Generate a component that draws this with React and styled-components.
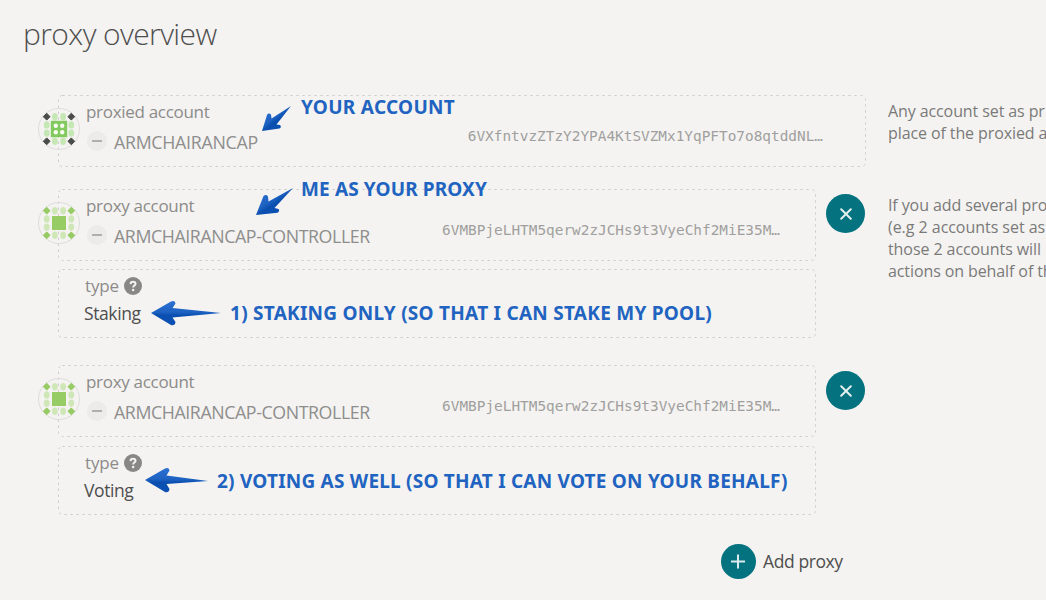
import React from "react";
import styled, { createGlobalStyle } from "styled-components";

const Global = createGlobalStyle`
  * { box-sizing: border-box; }
  body {
    margin: 0;
    background: #f4f3f1;
    color: #4e4e4e;
    font-family: "Open Sans", "Noto Sans", sans-serif;
    overflow: hidden;
  }
`;

const Page = styled.main`
  position: relative;
  width: 1046px;
  height: 600px;
  padding: 11px 0 0 23px;
  overflow: hidden;
`;

const Title = styled.h1`
  margin: 0 0 38px;
  font-size: 30px;
  font-weight: 300;
  line-height: 46px;
  letter-spacing: -0.6px;
  white-space: nowrap;
  color: #4e4e4e;
`;

const Columns = styled.div`
  display: flex;
  gap: 22px;
  padding-left: 35px;
`;

const Content = styled.section`
  width: 808px;
  flex: none;
  display: flex;
  flex-direction: column;
`;

const Help = styled.aside`
  flex: none;
  width: 158px;
  padding-top: 5px;
  display: flex;
  flex-direction: column;
  gap: 50px;
`;

const HelpText = styled.p`
  margin: 0;
  font-size: 16px;
  line-height: 22px;
  color: #7a7a79;
  white-space: nowrap;
`;

const HelpLine = styled.span`
  display: block;
  width: max-content;
  letter-spacing: ${(p) => p.$track}px;
`;

const ProxyRow = styled.div`
  display: flex;
  gap: 10px;
  margin-top: ${(p) => p.$top}px;
`;

const Fields = styled.div`
  width: 758px;
  display: flex;
  flex-direction: column;
  gap: ${(p) => p.$gap}px;
`;

const Box = styled.div`
  position: relative;
  border: 1px solid transparent;
`;

const Outline = styled.svg`
  position: absolute;
  top: -1px;
  left: -1px;
  width: calc(100% + 2px);
  height: calc(100% + 2px);
  overflow: hidden;
  pointer-events: none;

  rect {
    x: 0.5px;
    y: 0.5px;
    width: calc(100% - 1px);
    height: calc(100% - 1px);
    rx: 4px;
    fill: none;
    stroke: #cccbc9;
    stroke-dasharray: 2.2 3.8;
  }
`;

const AccountBox = styled(Box)`
  height: 72px;
  padding-right: ${(p) => p.$right}px;
  display: flex;
  align-items: center;
`;

const TypeBox = styled(Box)`
  height: 69px;
  padding: 3px 0 0 26px;
`;

const Identicon = styled.svg`
  position: relative;
  z-index: 1;
  flex: none;
  width: 42px;
  height: 42px;
  margin: -4px 0 0 -21px;
`;

const Details = styled.div`
  flex: 1;
  padding-left: 6px;
  margin-top: -4px;
`;

const Label = styled.div`
  display: flex;
  align-items: center;
  gap: 5px;
  height: ${(p) => p.$height || 26}px;
  font-size: 17px;
  letter-spacing: ${(p) => p.$track}px;
  color: #8c8b8a;
  white-space: nowrap;
`;

const NameLine = styled.div`
  display: flex;
  align-items: center;
  gap: 7px;
  height: 35px;
`;

const Minus = styled.span`
  width: 20px;
  height: 20px;
  margin: -2px 0 0 1px;
  border-radius: 50%;
  background: #ecebea;
  display: grid;
  place-items: center;

  &::before {
    content: "";
    width: 10px;
    height: 2px;
    margin-right: 1px;
    background: #b0afae;
  }
`;

const Name = styled.span`
  font-size: 17.8px;
  letter-spacing: ${(p) => p.$track}px;
  color: #8e8e8d;
  white-space: nowrap;
`;

const Address = styled.span`
  font-family: "DejaVu Sans Mono", monospace;
  font-size: 14.4px;
  letter-spacing: 0;
  padding-top: 9px;
  color: #a09f9e;
`;

const Value = styled.div`
  height: 30px;
  line-height: 30px;
  margin-left: -1px;
  font-size: 17.5px;
  letter-spacing: -0.4px;
  color: #4e4e4e;
`;

const HelpIcon = styled.svg`
  width: 18px;
  height: 18px;
  margin-top: 1px;
`;

const RoundButton = styled.button`
  flex: none;
  width: ${(p) => p.$size}px;
  height: ${(p) => p.$size}px;
  margin: ${(p) => p.$top || 0}px 0 0;
  padding: 0;
  border: 0;
  border-radius: 50%;
  background: #04737f;
  display: grid;
  place-items: center;
`;

const Actions = styled.div`
  display: flex;
  align-items: center;
  gap: 7px;
  margin: 29px 0 0 663px;
`;

const ActionLabel = styled.span`
  font-size: 17.5px;
  letter-spacing: -0.4px;
  padding-bottom: 2px;
  color: #4e4e4e;
  white-space: nowrap;
`;

const Note = styled.span`
  position: absolute;
  left: ${(p) => p.$x}px;
  top: ${(p) => p.$y}px;
  font-family: "Noto Sans", sans-serif;
  font-size: 19px;
  font-weight: 700;
  line-height: 26px;
  letter-spacing: ${(p) => p.$track || 0}px;
  color: #2163c0;
  white-space: nowrap;
`;

const Arrows = styled.svg`
  position: absolute;
  inset: 0;
  pointer-events: none;
`;

function Avatar({ main, light, corner, dotted }) {
  const e = 4.1;
  const o = 12.3;
  return (
    <Identicon viewBox="-21 -21 42 42">
      <circle r="20.5" fill="none" stroke="#dddddb" />
      {[-1, 1].map((a) =>
        [-1, 1].map((b) => (
          <g key={`${a}${b}`}>
            <ellipse cx={a * e} cy={b * o} rx="2.9" ry="3.7" fill={light} />
            <ellipse cx={a * o} cy={b * e} rx="2.9" ry="3.6" fill={light} />
            <path
              d="M0-3.400 3.400 0 0 3.400-3.400 0Z"
              transform={`translate(${a * o} ${b * o})`}
              fill={corner}
              stroke={corner}
              strokeWidth="1"
              strokeLinejoin="round"
            />
          </g>
        ))
      )}
      {dotted ? (
        <>
          <rect x="-8.2" y="-8.2" width="16.4" height="16.4" fill={main} />
          {[-3.2, 3.2].map((x) =>
            [-3.2, 3.2].map((y) => (
              <circle key={`${x}${y}`} cx={x} cy={y} r="2.2" fill="#f6fbf3" />
            ))
          )}
        </>
      ) : (
        <rect x="-7" y="-7" width="14" height="14" fill={main} />
      )}
    </Identicon>
  );
}

function Account({ label, labelTrack, name, nameTrack, address, right, avatar }) {
  return (
    <AccountBox $right={right}>
      <Outline><rect /></Outline>
      <Avatar {...avatar} />
      <Details>
        <Label $track={labelTrack}>{label}</Label>
        <NameLine>
          <Minus />
          <Name $track={nameTrack}>{name}</Name>
        </NameLine>
      </Details>
      <Address>{address}</Address>
    </AccountBox>
  );
}

function TypeField({ value }) {
  return (
    <TypeBox>
      <Outline><rect /></Outline>
      <Label $track={-0.15} $height={25}>
        type
        <HelpIcon viewBox="0 0 18 18">
          <circle cx="9" cy="9" r="9" fill="#888786" />
          <path
            d="M6.5 7.1C6.6 5.4 7.6 4.7 9 4.7c1.500 0 2.500.8 2.500 2 0 1.900-2.300 1.800-2.300 3.700"
            fill="none"
            stroke="#f4f3f1"
            strokeWidth="2"
          />
          <circle cx="9.100" cy="12.900" r="1.250" fill="#f4f3f1" />
        </HelpIcon>
      </Label>
      <Value>{value}</Value>
    </TypeBox>
  );
}

const proxied = { main: "#83ca5e", light: "#c4e7b4", corner: "#4a4c4a", dotted: true };
const proxy = { main: "#97cb64", light: "#cfe6b7", corner: "#97cb64" };

function Proxy({ type, top, gap, buttonTop }) {
  return (
    <ProxyRow $top={top}>
      <Fields $gap={gap}>
        <Account
          label="proxy account"
          labelTrack={-0.3}
          name="ARMCHAIRANCAP-CONTROLLER"
          nameTrack={-0.41}
          address="6VMBPjeLHTM5qerw2zJCHs9t3VyeChf2MiE35M…"
          right={35}
          avatar={proxy}
        />
        <TypeField value={type} />
      </Fields>
      <RoundButton $size={39} $top={buttonTop} aria-label="Remove proxy">
        <svg width="12" height="12" viewBox="0 0 12 12">
          <path d="m1.200 1.200 9.600 9.600m0-9.600-9.600 9.600" stroke="#e3f0f0" strokeWidth="2" strokeLinecap="round" />
        </svg>
      </RoundButton>
    </ProxyRow>
  );
}

export default function App() {
  return (
    <>
      <Global />
      <Page>
        <Title>proxy overview</Title>
        <Columns>
          <Content>
            <Account
              label="proxied account"
              labelTrack={-0.3}
              name="ARMCHAIRANCAP"
              nameTrack={-0.28}
              address="6VXfntvzZTzY2YPA4KtSVZMx1YqPFTo7o8qtddNL…"
              right={42}
              avatar={proxied}
            />
            <Proxy type="Staking" top={22} gap={8} buttonTop={5} />
            <Proxy type="Voting" top={27} gap={9} buttonTop={6} />
            <Actions>
              <RoundButton $size={35} aria-label="Add proxy">
                <svg width="15" height="15" viewBox="0 0 15 15">
                  <path d="M7 .5v14M0 7.500h14" stroke="#d9ebec" strokeWidth="2" />
                </svg>
              </RoundButton>
              <ActionLabel>Add proxy</ActionLabel>
            </Actions>
          </Content>
          <Help>
            <HelpText>
              <HelpLine $track={-0.1}>Any account set as pr</HelpLine>
              <HelpLine $track={-0.1}>place of the proxied a</HelpLine>
            </HelpText>
            <HelpText>
              <HelpLine $track={-0.1}>If you add several pro</HelpLine>
              <HelpLine $track={-0.04}>(e.g 2 accounts set as</HelpLine>
              <HelpLine $track={-0.08}>those 2 accounts will</HelpLine>
              <HelpLine $track={-0.1}>actions on behalf of th</HelpLine>
            </HelpText>
          </Help>
        </Columns>

        <Arrows width="1046" height="600">
          <defs>
            <linearGradient id="blue" x1="0" y1="0" x2="0" y2="1">
              <stop offset="0" stopColor="#2c72d3" />
              <stop offset="0.45" stopColor="#1e62c2" />
              <stop offset="0.6" stopColor="#0a4fb0" />
              <stop offset="1" stopColor="#0b51b4" />
            </linearGradient>
            <linearGradient id="blueDiagonal" x1="0.1" y1="0.1" x2="0.8" y2="0.9">
              <stop offset="0" stopColor="#2c72d3" />
              <stop offset="0.45" stopColor="#1e62c2" />
              <stop offset="0.6" stopColor="#0a4fb0" />
              <stop offset="1" stopColor="#0b51b4" />
            </linearGradient>
          </defs>
          <g fill="url(#blueDiagonal)">
            <path d="M262 131 267 115Q268.500 112.500 271 114.500L271.500 118.500 291 106 276.500 124.500 280 125Q282 127 279.500 128.500Z" />
            <path d="M256 215 263.500 196Q266 194 268 196.500L268.500 201.500 293 188 274.500 208 278.500 209Q280 211 277.500 212.800Z" />
          </g>
          <g fill="url(#blue)">
            <path d="M151 313 171 301.500Q175 300 175.500 303.500L172.500 308 221 313 172.500 317.500 175.500 322Q175 326 171 325Z" />
            <path d="M145 480 165 468.500Q169 467 169.500 470.500L166.500 475.500 208 481 166.500 484 169.500 489Q169 493 165 492Z" />
          </g>
        </Arrows>
        <Note $x={301} $y={94} $track={0.3}>YOUR ACCOUNT</Note>
        <Note $x={301} $y={176} $track={0.13}>ME AS YOUR PROXY</Note>
        <Note $x={230} $y={300} $track={0.26}>1) STAKING ONLY (SO THAT I CAN STAKE MY POOL)</Note>
        <Note $x={217} $y={468} $track={0.22}>2) VOTING AS WELL (SO THAT I CAN VOTE ON YOUR BEHALF)</Note>
      </Page>
    </>
  );
}
